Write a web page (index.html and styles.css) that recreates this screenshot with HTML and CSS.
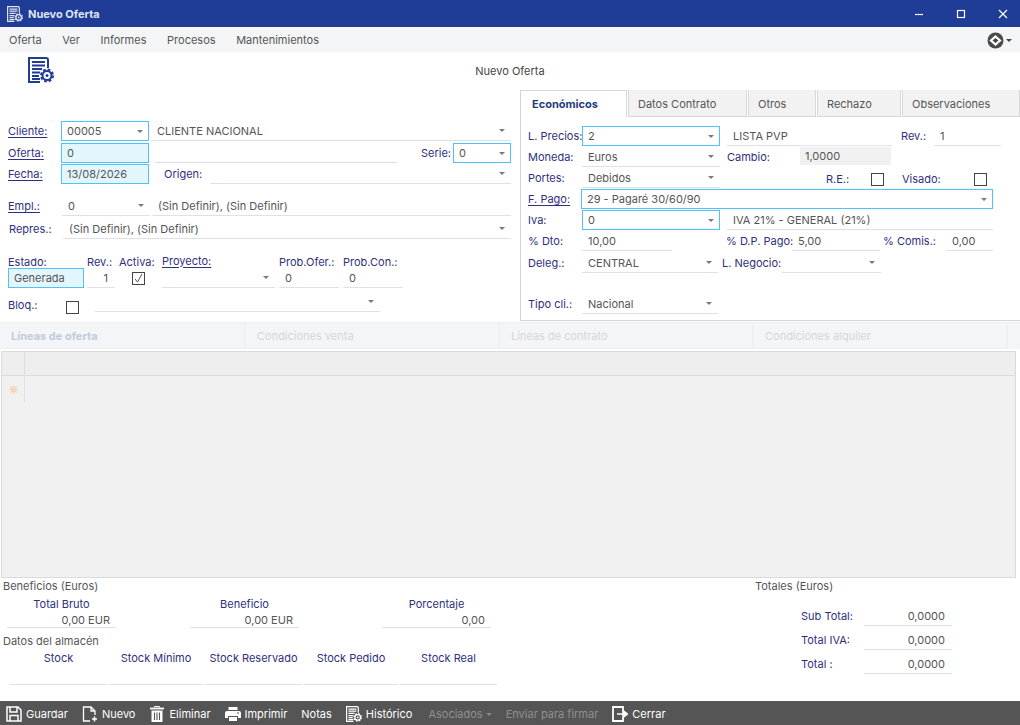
FILE: index.html
```html
<!DOCTYPE html>
<html lang="es">
<head>
    <meta charset="UTF-8">
    <meta name="viewport" content="width=device-width, initial-scale=1.0">
    <title>Nuevo Oferta</title>
    <link rel="stylesheet" href="styles.css">
</head>
<body>
    <svg class="defs" width="0" height="0">
        <symbol id="doc-gear" viewBox="0 0 26 26">
            <path d="M12 25H1V1H18a2 2 0 0 1 2 2V11" fill="none" stroke="currentColor" stroke-width="2"/>
            <path d="M4 5H17M4 8.500H17M4 12H14M4 15.500H12M4 19H11M4 22H12" fill="none" stroke="currentColor" stroke-width="2"/>
            <circle cx="19" cy="18.500" r="4.500" fill="none" stroke="currentColor" stroke-width="2"/>
            <circle cx="19" cy="18.500" r="6" fill="none" stroke="currentColor" stroke-width="2" stroke-dasharray="2.700 2"/>
            <circle cx="19" cy="18.500" r="1.500" fill="currentColor"/>
        </symbol>
    </svg>

    <div class="app">
        <div class="titlebar">
            <svg class="title-icon"><use href="#doc-gear"/></svg>
            <span class="title-text">Nuevo Oferta</span>
            <div class="win-controls">
                <svg width="10" height="10" viewBox="0 0 10 10"><path d="M1 5.500H9" stroke="#fff" stroke-width="1.200"/></svg>
                <svg width="10" height="10" viewBox="0 0 10 10"><rect x="1.500" y="1.500" width="7" height="7" fill="none" stroke="#fff" stroke-width="1.200"/></svg>
                <svg width="10" height="10" viewBox="0 0 10 10"><path d="M1 1L9 9M9 1L1 9" stroke="#fff" stroke-width="1.200"/></svg>
            </div>
        </div>

        <div class="menubar">
            <span class="menu-item">Oferta</span>
            <span class="menu-item">Ver</span>
            <span class="menu-item">Informes</span>
            <span class="menu-item">Procesos</span>
            <span class="menu-item">Mantenimientos</span>
            <div class="menu-logo">
                <svg width="17" height="17" viewBox="0 0 17 17">
                    <circle cx="8.500" cy="8.500" r="8" fill="#4a4a4a"/>
                    <path d="M8.500 4.500L13 8.500L8.500 12.500L4 8.500Z" fill="none" stroke="#fff" stroke-width="2.200"/>
                </svg>
                <i class="caret caret-dark"></i>
            </div>
        </div>

        <div class="page-head">
            <div class="head-left"><svg class="head-icon"><use href="#doc-gear"/></svg></div>
            <span class="head-title">Nuevo Oferta</span>
        </div>

        <div class="form-area">
            <div class="left-panel">
                <div class="row mt-31">
                    <span class="lbl link w-53"><u>Cliente:</u></span>
                    <div class="field req w-88">00005<i class="caret"></i></div>
                    <div class="field ml-2 w-360">CLIENTE NACIONAL<i class="caret"></i></div>
                </div>
                <div class="row mt-2">
                    <span class="lbl link w-53"><u>Oferta:</u></span>
                    <div class="field req fill w-88">0</div>
                    <div class="field ml-6 w-242"></div>
                    <span class="lbl serie-lbl">Serie:</span>
                    <div class="field req w-58">0<i class="caret"></i></div>
                </div>
                <div class="row mt-1">
                    <span class="lbl link w-53"><u>Fecha:</u></span>
                    <div class="field req fill w-88">13/08/2026</div>
                    <span class="lbl origen-lbl">Origen:</span>
                    <div class="field w-300"><i class="caret"></i></div>
                </div>
                <div class="row mt-12">
                    <span class="lbl link w-54"><u>Empl.:</u></span>
                    <div class="field w-88">0<i class="caret"></i></div>
                    <div class="field ml-2 w-359">(Sin Definir), (Sin Definir)</div>
                </div>
                <div class="row mt-3">
                    <span class="lbl w-55 pl-1">Repres.:</span>
                    <div class="field w-448">(Sin Definir), (Sin Definir)<i class="caret"></i></div>
                </div>

                <div class="row-labels mt-16">
                    <span class="lbl w-79">Estado:</span>
                    <span class="lbl w-32">Rev.:</span>
                    <span class="lbl w-43">Activa:</span>
                    <span class="lbl link w-117 raise"><u>Proyecto:</u></span>
                    <span class="lbl w-64">Prob.Ofer.:</span>
                    <span class="lbl">Prob.Con.:</span>
                </div>
                <div class="row">
                    <div class="field req fill w-76 estado">Generada</div>
                    <div class="field ml-3 w-28 right">1</div>
                    <div class="check-cell w-47"><span class="check on">
                        <svg width="11" height="11" viewBox="0 0 11 11"><path d="M2 6L4.500 9L9 1" fill="none" stroke="#555" stroke-width="1"/></svg>
                    </span></div>
                    <div class="field w-113"><i class="caret"></i></div>
                    <div class="field ml-4 w-60">0</div>
                    <div class="field ml-4 w-60">0</div>
                </div>
                <div class="row mt-9">
                    <span class="lbl w-58 bloq-lbl">Bloq.:</span>
                    <span class="check"></span>
                    <div class="field ml-16 w-285 bloq-field"><i class="caret"></i></div>
                </div>
            </div>

            <div class="right-panel">
                <div class="tabs">
                    <span class="tab active">Económicos</span>
                    <span class="tab w-tab-2">Datos Contrato</span>
                    <span class="tab w-tab-3">Otros</span>
                    <span class="tab w-tab-4">Rechazo</span>
                    <span class="tab w-tab-5">Observaciones</span>
                </div>
                <div class="tab-body">
                    <div class="row">
                        <span class="lbl w-54">L. Precios:</span>
                        <div class="field req w-138">2<i class="caret"></i></div>
                        <div class="field ml-7 w-165">LISTA PVP</div>
                        <span class="lbl rev-lbl">Rev.:</span>
                        <div class="field w-67">1</div>
                    </div>
                    <div class="row mt-1">
                        <span class="lbl w-54">Moneda:</span>
                        <div class="field w-138">Euros<i class="caret"></i></div>
                        <span class="lbl ml-7 w-73">Cambio:</span>
                        <div class="field readonly w-91">1,0000</div>
                    </div>
                    <div class="row mt-1">
                        <span class="lbl w-54">Portes:</span>
                        <div class="field w-138">Debidos<i class="caret"></i></div>
                        <span class="lbl re-lbl low">R.E.:</span>
                        <span class="check low"></span>
                        <span class="lbl visado-lbl low">Visado:</span>
                        <span class="check low"></span>
                    </div>
                    <div class="row mt-1">
                        <span class="lbl link w-53"><u>F. Pago:</u></span>
                        <div class="field req w-412">29 - Pagaré 30/60/90<i class="caret"></i></div>
                    </div>
                    <div class="row mt-1">
                        <span class="lbl w-54">Iva:</span>
                        <div class="field req w-138">0<i class="caret"></i></div>
                        <div class="field ml-7 w-266">IVA 21% - GENERAL (21%)</div>
                    </div>
                    <div class="row mt-1">
                        <span class="lbl w-54">% Dto:</span>
                        <div class="field w-90">10,00</div>
                        <span class="lbl dp-lbl">% D.P. Pago:</span>
                        <div class="field w-88">5,00</div>
                        <span class="lbl ml-3 w-63">% Comis.:</span>
                        <div class="field w-47">0,00</div>
                    </div>
                    <div class="row mt-2">
                        <span class="lbl w-54">Deleg.:</span>
                        <div class="field w-136">CENTRAL<i class="caret"></i></div>
                        <span class="lbl ml-4 w-60">L. Negocio:</span>
                        <div class="field w-99"><i class="caret"></i></div>
                    </div>
                    <div class="row mt-21">
                        <span class="lbl w-54">Tipo cli.:</span>
                        <div class="field w-136">Nacional<i class="caret"></i></div>
                    </div>
                </div>
            </div>
        </div>

        <div class="lines-tabs">
            <span class="lines-tab first">Líneas de oferta</span>
            <span class="lines-tab">Condiciones venta</span>
            <span class="lines-tab">Líneas de contrato</span>
            <span class="lines-tab">Condiciones alquiler</span>
        </div>

        <div class="grid-box">
            <div class="grid-head"><div class="grid-corner"></div></div>
            <div class="grid-row">
                <div class="grid-marker">
                    <svg width="9" height="9" viewBox="0 0 9 9">
                        <path d="M4.500 0V9M0 4.500H9M1.300 1.300L7.700 7.700M7.700 1.300L1.300 7.700" stroke="#f0d7b8" stroke-width="1.300"/>
                    </svg>
                </div>
            </div>
        </div>

        <div class="bottom">
            <div class="benef">
                <div class="sec-title">Beneficios (Euros)</div>
                <div class="benef-cols">
                    <div class="stat first-stat"><span class="lbl">Total Bruto</span><div class="field right">0,00 EUR</div></div>
                    <div class="stat second-stat"><span class="lbl">Beneficio</span><div class="field right">0,00 EUR</div></div>
                    <div class="stat third-stat"><span class="lbl">Porcentaje</span><div class="field right">0,00</div></div>
                </div>
                <div class="sec-title mt-5">Datos del almacén</div>
                <div class="stock-cols">
                    <div class="stock w-97"><span class="lbl">Stock</span><div class="field"></div></div>
                    <div class="stock w-94"><span class="lbl">Stock Mínimo</span><div class="field"></div></div>
                    <div class="stock w-97"><span class="lbl">Stock Reservado</span><div class="field"></div></div>
                    <div class="stock w-94"><span class="lbl">Stock Pedido</span><div class="field"></div></div>
                    <div class="stock w-97"><span class="lbl">Stock Real</span><div class="field"></div></div>
                </div>
            </div>
            <div class="totals">
                <div class="sec-title">Totales (Euros)</div>
                <div class="total-row mt-12"><span class="lbl w-63">Sub Total:</span><div class="field right w-88">0,0000</div></div>
                <div class="total-row mt-4"><span class="lbl w-63">Total IVA:</span><div class="field right w-88">0,0000</div></div>
                <div class="total-row mt-4"><span class="lbl w-63">Total :</span><div class="field right w-88">0,0000</div></div>
            </div>
        </div>

        <div class="footer">
            <span class="btn">
                <svg class="ico" viewBox="0 0 16 16"><path d="M1 1H12L15 4V15H1ZM4 1V6H11V1M4 15V9.500H12V15" fill="none" stroke="#fff" stroke-width="1.500"/></svg>
                Guardar
            </span>
            <span class="btn">
                <svg class="ico" viewBox="0 0 16 16"><path d="M8 15H1.500V1H9L13 5V9M9 1V5H13" fill="none" stroke="#fff" stroke-width="1.300"/><path d="M12.500 10.500V15.500M10 13H15" stroke="#fff" stroke-width="1.500"/></svg>
                Nuevo
            </span>
            <span class="btn">
                <svg class="ico" viewBox="0 0 16 16"><path d="M1 2.500H15" stroke="#fff" stroke-width="1.800"/><path d="M5.500 1.500V.500H10.500V1.500" stroke="#fff" fill="none"/><path d="M2.500 4.500H13.500V16H2.500Z" fill="#fff"/><path d="M5.500 6.500V14M8 6.500V14M10.500 6.500V14" stroke="#555" stroke-width="1.100"/></svg>
                Eliminar
            </span>
            <span class="btn">
                <svg class="ico" viewBox="0 0 16 16"><path d="M3.500 1H12.500V4H3.500Z" fill="#fff"/><path d="M2 5H14a2 2 0 0 1 2 2V12H13V10H3V12H0V7a2 2 0 0 1 2-2Z" fill="#fff"/><path d="M4 11H12V15H4Z" fill="#fff"/><path d="M12 7H14" stroke="#555"/></svg>
                Imprimir
            </span>
            <span class="btn">Notas</span>
            <span class="btn">
                <svg class="ico"><use href="#doc-gear"/></svg>
                Histórico
            </span>
            <span class="btn off asociados">Asociados<i class="caret caret-off"></i></span>
            <span class="btn off">Enviar para firmar</span>
            <span class="btn">
                <svg class="ico" viewBox="0 0 16 16"><path d="M11 4.500V1H1V15H11V11.500" fill="none" stroke="#fff" stroke-width="1.800"/><path d="M5 8H11M11 4.500L15.500 8L11 11.500Z" fill="#fff" stroke="#fff" stroke-width="1.500"/></svg>
                Cerrar
            </span>
        </div>
    </div>
</body>
</html>
```

FILE: styles.css
```css
* {
    box-sizing: border-box;
}

body {
    margin: 0;
    background: white;
    font-family: Inter, 'Liberation Sans', sans-serif;
    font-size: 11px;
    color: #444;
    overflow: hidden;
}

.defs {
    position: absolute;
}

.app {
    width: 1020px;
    height: 725px;
    display: flex;
    flex-direction: column;
}

/* title bar */
.titlebar {
    height: 27px;
    flex: none;
    display: flex;
    align-items: center;
    padding-left: 7px;
    background: #1f3c96;
    color: #dfe4f2;
}

.title-icon {
    width: 16px;
    height: 16px;
}

.title-text {
    margin-left: 5px;
    font-weight: 700;
}

.win-controls {
    margin-left: auto;
    display: flex;
    gap: 32px;
    padding-right: 12px;
}

/* menu */
.menubar {
    height: 25px;
    flex: none;
    display: flex;
    align-items: center;
    padding-left: 9px;
    gap: 20.6px;
    background: #f4f5f7;
    color: #555;
}

.menu-logo {
    margin: 2px 0 0 auto;
    display: flex;
    align-items: center;
    gap: 2px;
    padding-right: 8px;
}

.page-head {
    height: 38px;
    flex: none;
    display: grid;
    grid-template-columns: 1fr auto 1fr;
    align-items: center;
}

.head-left {
    padding: 0 0 2px 28px;
    display: flex;
}

.head-icon {
    width: 26px;
    height: 26px;
    color: #1f3c96;
}

/* form */
.form-area {
    height: 232px;
    flex: none;
    display: flex;
}

.left-panel {
    width: 520px;
    flex: none;
    padding-left: 8px;
}

.right-panel {
    width: 500px;
    flex: none;
    height: 231px;
    border-left: 1px solid #d5d5d5;
    border-bottom: 1px solid #d5d5d5;
}

.row {
    display: flex;
    align-items: center;
    height: 20px;
}

.row-labels {
    display: flex;
    height: 13px;
    align-items: center;
}

.lbl {
    flex: none;
    color: #2f2f7e;
    white-space: nowrap;
}

.lbl u {
    text-underline-offset: 2px;
}

.raise {
    margin-bottom: 2px;
}

.low {
    margin-top: 2px;
}

.bloq-lbl {
    margin-bottom: 4px;
}

.bloq-field {
    margin-bottom: 10px;
}

.field {
    height: 20px;
    flex: none;
    display: flex;
    align-items: center;
    padding-left: 6px;
    padding-right: 6px;
    border-bottom: 1px solid #dfe1e8;
    white-space: nowrap;
    color: #555;
}

.field.req {
    border: 1px solid #4fc3f7;
    padding-left: 5px;
    padding-right: 5px;
}

.field.fill {
    background: #e3f6fe;
}

.field.readonly {
    height: 18px;
    margin-top: -2px;
    background: #f1f1f1;
    border-bottom: 0;
    padding-left: 5px;
}

.field.right {
    justify-content: flex-end;
    padding-right: 7px;
}

.estado {
    padding-left: 6px;
}

.caret {
    width: 0;
    height: 0;
    margin-left: auto;
    border-left: 3px solid transparent;
    border-right: 3px solid transparent;
    border-top: 3px solid #7a7a7a;
}

.caret-dark {
    margin-left: 0;
    border-top-color: #444;
}

.caret-off {
    margin-left: -1px;
    border-top-color: #888;
}

.check {
    width: 13px;
    height: 13px;
    flex: none;
    display: flex;
    align-items: center;
    justify-content: center;
    border: 1px solid #444;
    background: white;
}

.check-cell {
    height: 20px;
    display: flex;
    align-items: center;
    padding-left: 17px;
}

.serie-lbl {
    margin-left: 24px;
    width: 32px;
}

.origen-lbl {
    margin-left: 15px;
    width: 47px;
}

.rev-lbl {
    margin-left: 9px;
    width: 33px;
}

.re-lbl {
    margin-left: 106px;
    width: 45px;
}

.visado-lbl {
    margin-left: 18px;
    width: 72px;
}

.dp-lbl {
    margin-left: 54px;
    width: 66px;
}

/* right panel tabs */
.tabs {
    display: flex;
    height: 27px;
    gap: 1px;
}

.tab {
    display: flex;
    align-items: center;
    padding: 1px 0 0 9px;
    background: #f2f2f2;
    border: 1px solid #d8d8d8;
    border-top: 0;
    color: #555;
}

.tab.active {
    width: 106px;
    background: white;
    border-top: 1px solid #d8d8d8;
    border-left: 0;
    border-bottom: 0;
    padding: 0 0 0 11px;
    font-weight: 700;
    color: #1f3c80;
}

.w-tab-2 { width: 119px; }
.w-tab-3 { width: 68px; }
.w-tab-4 { width: 84px; }
.w-tab-5 { width: 118px; }

.tab-body {
    padding: 9px 0 0 7px;
}

/* lines area */
.lines-tabs {
    height: 27px;
    flex: none;
    display: flex;
    background: #f4f5f7;
    border-top: 1px solid #eeeff2;
}

.lines-tab {
    width: 254px;
    display: flex;
    align-items: center;
    padding-left: 11px;
    color: #d4d6db;
    border-right: 2px solid #f0f1f3;
    border-bottom: 1px solid #eeeff2;
}

.lines-tab.first {
    width: 246px;
    font-weight: 700;
    color: #c3c9de;
}

.grid-box {
    width: 1015px;
    height: 227px;
    flex: none;
    margin: 2px 0 0 1px;
    background: #f1f1f1;
    border: 1px solid #dadada;
}

.grid-head {
    height: 24px;
    background: #eeeeee;
    border-bottom: 1px solid #dcdcdc;
}

.grid-corner {
    width: 23px;
    height: 23px;
    border-right: 1px solid #dcdcdc;
}

.grid-row {
    height: 26px;
}

.grid-marker {
    width: 23px;
    height: 26px;
    display: flex;
    align-items: center;
    justify-content: center;
    border-right: 1px solid #e2e2e2;
}

/* totals */
.bottom {
    flex: 1;
    display: flex;
}

.benef {
    width: 755px;
    flex: none;
}

.sec-title {
    height: 16px;
    line-height: 16px;
    padding-left: 3px;
    color: #555;
}

.benef-cols {
    display: flex;
    padding: 2px 0 0 7px;
}

.stat,
.stock {
    flex: none;
    display: flex;
    flex-direction: column;
    align-items: stretch;
}

.stat {
    width: 109px;
}

.stat .lbl,
.stock .lbl {
    height: 16px;
    line-height: 16px;
    text-align: center;
}

.stat .field {
    height: 16px;
}

.stat .field.right {
    padding-right: 6px;
}

.stock .field {
    height: 19px;
}

.second-stat {
    margin-left: 74px;
}

.third-stat {
    margin-left: 83px;
}

.stock-cols {
    display: flex;
    gap: 2px;
    padding: 1px 0 0 10px;
}

.totals {
    flex: 1;
}

.totals .sec-title {
    padding-left: 0;
}

.total-row {
    display: flex;
    align-items: center;
    height: 20px;
    padding-left: 46px;
}

/* footer */
.footer {
    height: 24px;
    flex: none;
    display: flex;
    align-items: center;
    gap: 14px;
    padding: 2px 0 0 6px;
    background: #555555;
    color: #fff;
}

.btn {
    display: flex;
    align-items: center;
    gap: 4px;
    white-space: nowrap;
}

.btn.off {
    color: #8f8f8f;
}

.asociados {
    margin-left: 2px;
}

.ico {
    width: 16px;
    height: 16px;
    color: #fff;
}

/* spacing and sizes */
.pl-1 { padding-left: 1px; }

.ml-2 { margin-left: 2px; }
.ml-3 { margin-left: 3px; }
.ml-4 { margin-left: 4px; }
.ml-6 { margin-left: 6px; }
.ml-7 { margin-left: 7px; }
.ml-16 { margin-left: 16px; }

.mt-1 { margin-top: 1px; }
.mt-2 { margin-top: 2px; }
.mt-3 { margin-top: 3px; }
.mt-4 { margin-top: 4px; }
.mt-5 { margin-top: 5px; }
.mt-9 { margin-top: 9px; }
.mt-12 { margin-top: 12px; }
.mt-16 { margin-top: 16px; }
.mt-21 { margin-top: 21px; }
.mt-31 { margin-top: 31px; }

.w-28 { width: 28px; }
.w-32 { width: 32px; }
.w-43 { width: 43px; }
.w-47 { width: 47px; }
.w-53 { width: 53px; }
.w-54 { width: 54px; }
.w-55 { width: 55px; }
.w-58 { width: 58px; }
.w-60 { width: 60px; }
.w-63 { width: 63px; }
.w-64 { width: 64px; }
.w-67 { width: 67px; }
.w-73 { width: 73px; }
.w-76 { width: 76px; }
.w-79 { width: 79px; }
.w-88 { width: 88px; }
.w-90 { width: 90px; }
.w-91 { width: 91px; }
.w-94 { width: 94px; }
.w-97 { width: 97px; }
.w-99 { width: 99px; }
.w-113 { width: 113px; }
.w-117 { width: 117px; }
.w-136 { width: 136px; }
.w-138 { width: 138px; }
.w-165 { width: 165px; }
.w-242 { width: 242px; }
.w-266 { width: 266px; }
.w-285 { width: 285px; }
.w-300 { width: 300px; }
.w-359 { width: 359px; }
.w-360 { width: 360px; }
.w-412 { width: 412px; }
.w-448 { width: 448px; }
```
